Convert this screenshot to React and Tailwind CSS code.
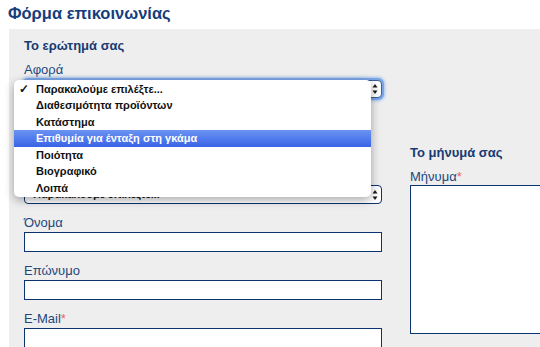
import React from "react";

const items = [
  "Παρακαλούμε επιλέξτε...",
  "Διαθεσιμότητα προϊόντων",
  "Κατάστημα",
  "Επιθυμία για ένταξη στη γκάμα",
  "Ποιότητα",
  "Βιογραφικό",
  "Λοιπά",
];

function Arrows() {
  return (
    <svg width="6" height="11" viewBox="0 0 6 11" className="absolute right-[3px] top-1/2 -translate-y-1/2">
      <path d="M3 0.5 L5.5 4 L0.5 4 Z" fill="#1a1a1a" />
      <path d="M3 10.5 L5.5 7 L0.5 7 Z" fill="#1a1a1a" />
    </svg>
  );
}

function Field({ label, required }) {
  return (
    <div className="mt-[11px]">
      <label className="block h-[16px] leading-[16px] text-[13px] text-[#23477d]">
        {label}
        {required && <span className="text-[#f0606a]">*</span>}
      </label>
      <div className="mt-[1px] h-[20px] bg-white border-[1.5px] border-[#0b3470]" />
    </div>
  );
}

export default function App() {
  return (
    <div className="relative w-[540px] h-[347px] overflow-hidden bg-white font-['Liberation_Sans',Arial,sans-serif]">
      <h1 className="pl-[8px] h-[29px] leading-[26px] text-[16.5px] font-bold text-[#163d7b]">
        Φόρμα επικοινωνίας
      </h1>
      <div className="ml-[9px] h-[330px] bg-[#eeeeee] pl-[15px] pt-[9px] flex gap-[28px]">
        <div className="w-[358px] shrink-0">
          <h2 className="h-[16px] leading-[16px] text-[13px] font-bold text-[#183b72]">
            Το ερώτημά σας
          </h2>
          <label className="block mt-[8px] h-[16px] leading-[16px] text-[13px] text-[#23477d]">
            Αφορά
          </label>
          <div className="relative mt-[2px] h-[18px] rounded-[4px] bg-white border border-[#3b5f99] shadow-[0_0_0_2px_#7aa6e6,0_0_3px_3px_#9fc0ee]">
            <Arrows />
          </div>
          <div className="relative mt-[87px] h-[19px] rounded-[4px] bg-white border border-[#0b3470] pl-[8px] text-[11px] font-bold leading-[17px] text-[#1a1a1a]">
            Παρακαλούμε επιλέξτε...
            <Arrows />
          </div>
          <Field label="Όνομα" />
          <Field label="Επώνυμο" />
          <Field label="E-Mail" required />
        </div>
        <div className="flex-1 pt-[107px]">
          <h2 className="h-[16px] leading-[16px] text-[13px] font-bold text-[#183b72]">
            Το μήνυμά σας
          </h2>
          <label className="block mt-[8px] h-[16px] leading-[16px] text-[13px] text-[#23477d]">
            Μήνυμα<span className="text-[#f0606a]">*</span>
          </label>
          <div className="h-[149px] w-[200px] bg-white border-[1.5px] border-[#0b3470]" />
        </div>
      </div>

      <ul className="absolute left-[14px] top-[80px] w-[357px] bg-white rounded-[5px] pt-[0.5px] pb-[1px] shadow-[0_3px_10px_rgba(0,0,0,0.35)]">
        {items.map((t, i) => (
          <li
            key={t}
            className={
              "relative h-[16.5px] leading-[16.5px] pl-[22px] text-[11px] font-bold " +
              (i === 3
                ? "bg-gradient-to-b from-[#6b93f3] to-[#3a62e6] text-white"
                : "text-[#111111]")
            }
          >
            {i === 0 && <span className="absolute left-[5px] text-[12px]">✓</span>}
            {t}
          </li>
        ))}
      </ul>
    </div>
  );
}
